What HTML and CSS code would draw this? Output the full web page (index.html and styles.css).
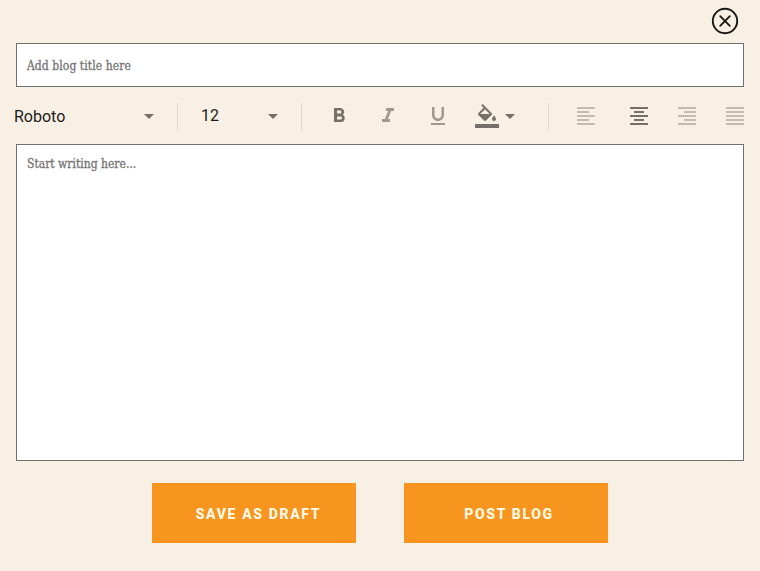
FILE: index.html
```html
<!DOCTYPE html>
<html lang="en">
<head>
<meta charset="utf-8">
<title>Blog editor</title>
<link rel="stylesheet" href="styles.css">
</head>
<body>
<main class="editor">
  <header class="top">
    <button class="close" aria-label="Close"><svg width="28" height="28" viewBox="0 0 28 28"><circle cx="14" cy="14" r="12.2"/><path d="M9.2 9.2l9.6 9.6M18.8 9.2l-9.6 9.6"/></svg></button>
  </header>
  <div class="field title"><span class="title-text">Add blog title here</span></div>
  <div class="toolbar">
    <div class="select font"><span>Roboto</span><svg class="icon" viewBox="0 0 24 24"><path d="M7 10l5 5 5-5z"/></svg></div>
    <i class="divider"></i>
    <div class="select size"><span>12</span><svg class="icon" viewBox="0 0 24 24"><path d="M7 10l5 5 5-5z"/></svg></div>
    <i class="divider"></i>
    <div class="styles">
      <svg class="icon" viewBox="0 0 24 24"><path d="M15.6 10.79c.97-.67 1.65-1.77 1.65-2.79 0-2.26-1.75-4-4-4H7v14h7.04c2.09 0 3.71-1.7 3.71-3.79 0-1.52-.86-2.82-2.15-3.42zM10 6.5h3c.83 0 1.5.67 1.5 1.5s-.67 1.5-1.5 1.5h-3v-3zm3.5 9H10v-3h3.5c.83 0 1.5.67 1.5 1.5s-.67 1.5-1.5 1.5z"/></svg>
      <svg class="icon mid" viewBox="0 0 24 24"><path d="M10 4v3h2.21l-3.42 8H6v3h8v-3h-2.21l3.42-8H18V4z"/></svg>
      <svg class="icon mid" viewBox="0 0 24 24"><path d="M12 17c3.31 0 6-2.69 6-6V3h-2.5v8c0 1.93-1.57 3.5-3.5 3.5S8.500 12.930 8.500 11V3H6v8c0 3.310 2.690 6 6 6zM5 19v2h14v-2z"/></svg>
      <div class="fill">
        <svg class="icon" viewBox="0 0 24 24"><path d="M16.560 8.940L7.620 0 6.210 1.410l2.380 2.380-5.150 5.150c-.59.59-.59 1.540 0 2.120l5.500 5.500c.29.29.68.44 1.060.44s.77-.15 1.060-.44l5.500-5.500c.59-.58.59-1.530 0-2.120zM5.210 10L10 5.210 14.790 10zM19 11.500s-2 2.170-2 3.500c0 1.100.9 2 2 2s2-.9 2-2c0-1.330-2-3.500-2-3.500zM0 20h24v4H0z"/></svg>
        <svg class="icon caret" viewBox="0 0 24 24"><path d="M7 10l5 5 5-5z"/></svg>
      </div>
    </div>
    <i class="divider"></i>
    <div class="aligns">
      <svg class="icon pale" viewBox="0 0 24 24"><path d="M3 3h18v2H3zM3 7h12v2H3zM3 11h18v2H3zM3 15h12v2H3zM3 19h18v2H3z"/></svg>
      <svg class="icon center" viewBox="0 0 24 24"><path d="M3 3h18v2H3zM7 7h10v2H7zM3 11h18v2H3zM7 15h10v2H7zM3 19h18v2H3z"/></svg>
      <svg class="icon pale" viewBox="0 0 24 24"><path d="M3 3h18v2H3zM9 7h12v2H9zM3 11h18v2H3zM9 15h12v2H9zM3 19h18v2H3z"/></svg>
      <svg class="icon pale" viewBox="0 0 24 24"><path d="M3 3h18v2H3zM3 7h18v2H3zM3 11h18v2H3zM3 15h18v2H3zM3 19h18v2H3z"/></svg>
    </div>
  </div>
  <div class="field content"><span class="content-text">Start writing here...</span></div>
  <footer class="actions">
    <button class="action">SAVE AS DRAFT</button>
    <button class="action post">POST BLOG</button>
  </footer>
</main>
</body>
</html>
```
FILE: styles.css
```css
* { box-sizing: border-box; }
body { margin: 0; background: #f9f0e5; font-family: Roboto, sans-serif; }
.editor { height: 571px; padding: 0 16px; overflow: hidden; }
.top { height: 43px; display: flex; justify-content: flex-end; padding: 7px 5px 0 0; }
.close { width: 28px; height: 28px; padding: 0; border: 0; background: none; }
.close svg { display: block; fill: none; stroke: #1a1815; stroke-width: 1.9; stroke-linecap: round; }
.field { background: #fff; border: 1px solid #707070; padding: 0 10px; color: #757575; font: 500 12px/16px "Roboto Slab", "DejaVu Serif Condensed", "DejaVu Serif", serif; -webkit-text-stroke: 0.3px #757575; }
.title { height: 44px; padding-top: 14px; letter-spacing: 0.07px; }
.content { height: 317px; padding-top: 11px; }
.toolbar { height: 57px; display: flex; align-items: flex-start; padding-top: 16px; margin-left: -2px; color: #1d1b18; font-size: 16px; line-height: 24px; }
.icon { display: block; flex: none; width: 24px; height: 24px; margin-top: 1px; fill: #757069; }
.mid { fill: #a09990; }
.pale { fill: #c4bbb0; }
.divider { width: 1px; height: 28px; background: #e0d8ce; flex: none; }
.select { flex: none; display: flex; justify-content: space-between; }
.font { width: 147px; margin-right: 16px; }
.font span { padding-top: 2px; }
.size { width: 84px; margin: 0 16px 0 23px; }
.size span { padding-top: 1px; }
.styles { flex: none; width: 196px; margin: 0 25px 0 24.5px; display: flex; justify-content: space-between; }
.fill { display: flex; }
.caret { margin-left: -1px; }
.aligns { flex: none; display: flex; gap: 24.5px; margin-left: 25px; }
.center { margin: 1px -1px 0 5px; }
.actions { display: flex; justify-content: center; gap: 48px; padding-top: 22px; }
.action { width: 204px; height: 60px; border: 0; padding: 2px 0 0 9px; background: #f8951f; color: #fffbe8; font: 800 14px/20px Roboto, sans-serif; letter-spacing: 1.65px; }
.post { padding-left: 6px; }
```
